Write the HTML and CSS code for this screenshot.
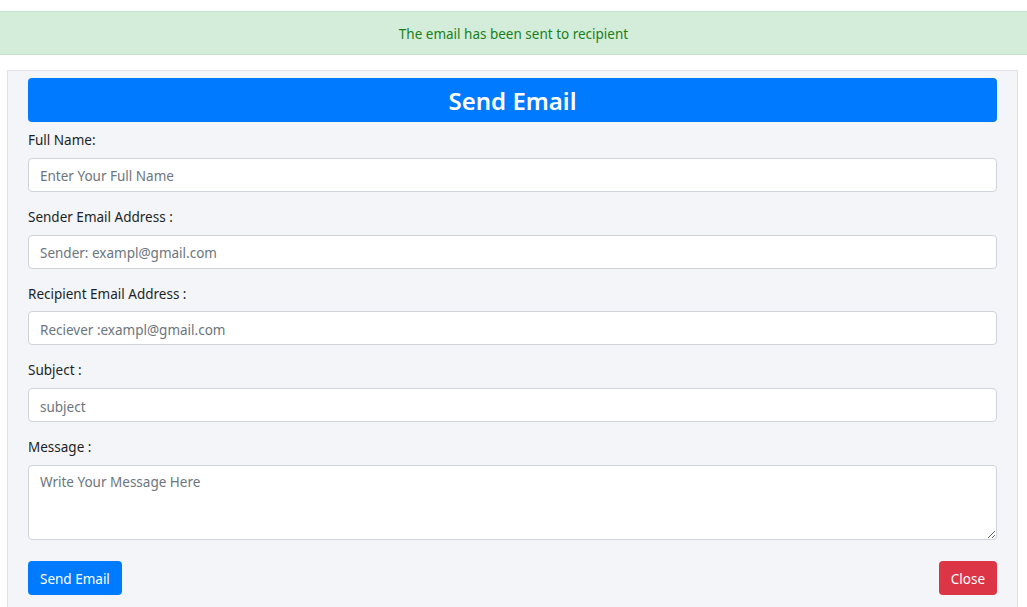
FILE: index.html
```html
<!DOCTYPE html>
<html>
<head>
<meta charset="utf-8">
<link rel="stylesheet" href="styles.css">
</head>
<body>
<div class="alert">The email has been sent to recipient</div>
<div class="panel">
  <h3 class="title">Send Email</h3>
  <form class="form">
    <label class="label">Full Name:</label>
    <input class="field" type="text" placeholder="Enter Your Full Name">
    <label class="label">Sender Email Address :</label>
    <input class="field" type="text" placeholder="Sender: exampl@gmail.com">
    <label class="label">Recipient Email Address :</label>
    <input class="field" type="text" placeholder="Reciever :exampl@gmail.com">
    <label class="label">Subject :</label>
    <input class="field" type="text" placeholder="subject">
    <label class="label">Message :</label>
    <textarea class="field area" placeholder="Write Your Message Here"></textarea>
    <div class="actions">
      <button type="button" class="btn btn-primary">Send Email</button>
      <button type="button" class="btn btn-danger">Close</button>
    </div>
  </form>
</div>
</body>
</html>
```
FILE: styles.css
```css
* { box-sizing: border-box; }
html, body { margin: 0; padding: 0; background: #fff; }
body {
  font-family: "Noto Sans", "Open Sans", sans-serif;
  font-size: 14px;
  color: #212529;
  padding-top: 11px;
}
.alert {
  height: 44px;
  padding-top: 2px;
  background: #d4edda;
  border-top: 1px solid #c3e6cb;
  border-bottom: 1px solid #c3e6cb;
  color: #198019;
  display: flex;
  align-items: center;
  justify-content: center;
  font-size: 13.5px;
  margin-bottom: 15px;
}
.panel {
  margin: 0 9px 0 7px;
  background: #f4f5f9;
  border: 1px solid #dfe1e6;
  border-bottom: none;
  padding: 7px 20px 12px;
  height: 560px;
}
.title {
  margin: 0;
  height: 44px;
  background: #007bff;
  color: #fff;
  border-radius: 4px;
  font-size: 24px;
  font-weight: 600;
  display: flex;
  align-items: center;
  justify-content: center;
}
.form { display: flex; flex-direction: column; padding-top: 7px; }
.label {
  display: block;
  height: 20.75px;
  line-height: 22px;
  margin-bottom: 8px;
  font-size: 13.5px;
  color: #1c1f23;
}
.field {
  display: block;
  width: 100%;
  height: 34px;
  margin: 0 0 14px;
  padding: 3px 11px 0;
  border: 1px solid #ced4da;
  border-radius: 4px;
  background: #fff;
  font-family: inherit;
  font-size: 13.5px;
  color: #495057;
}
.field::placeholder { color: #6c757d; }
.area {
  height: 75px;
  padding: 7px 11px;
  resize: vertical;
  margin-bottom: 21px;
}
.actions { display: flex; justify-content: space-between; }
.btn {
  height: 34px;
  padding: 3px 12px 0;
  border: none;
  border-radius: 4px;
  color: #fff;
  font-family: inherit;
  font-size: 13.5px;
}
.btn-primary { background: #007bff; }
.btn-danger { background: #dc3545; }
```
